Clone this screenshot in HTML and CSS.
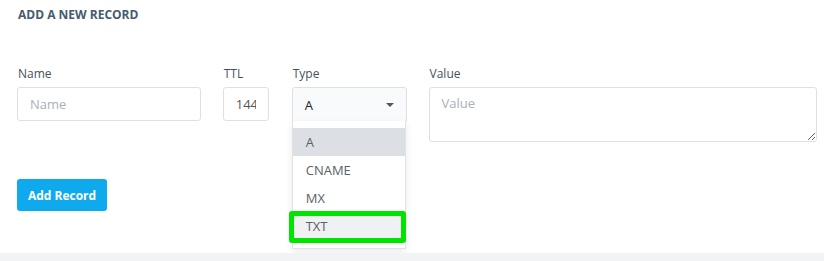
FILE: index.html
```html
<!DOCTYPE html>
<html lang="en">
<head>
    <meta charset="UTF-8" />
    <title>Add a new record</title>
    <link rel="stylesheet" href="styles.css">
</head>
<body>
    <div class="card">
        <h2 class="card-title">ADD A NEW RECORD</h2>

        <div class="fields">
            <div class="field field-name">
                <label>Name</label>
                <input type="text" class="input" placeholder="Name" />
            </div>
            <div class="field field-ttl">
                <label>TTL</label>
                <input type="text" class="input" value="14400" />
            </div>
            <div class="field field-type">
                <label>Type</label>
                <div class="select">
                    <span>A</span>
                    <span class="caret"></span>
                </div>
                <ul class="options">
                    <li class="active">A</li>
                    <li>CNAME</li>
                    <li>MX</li>
                    <li class="hover">TXT</li>
                </ul>
                <div class="mark"></div>
            </div>
            <div class="field field-value">
                <label>Value</label>
                <textarea class="input" placeholder="Value"></textarea>
            </div>
        </div>

        <button class="btn">Add Record</button>
    </div>
</body>
</html>
```

FILE: styles.css
```css
body {
    margin: 0;
    background: #f2f3f5;
    font-family: "Open Sans", "Noto Sans", sans-serif;
    color: #4b5663;
}

.card {
    background: #fff;
    height: 253px;
    padding: 7px 7px 0 17px;
    box-sizing: border-box;
    box-shadow: 0 1px 3px rgba(0, 0, 0, 0.06);
}

.card-title {
    margin: 0 0 0 1px;
    font-size: 12px;
    font-weight: 700;
    line-height: 16px;
    color: #475a6e;
}

.fields {
    display: flex;
    gap: 22px;
    margin-top: 43px;
}

.field {
    display: flex;
    flex-direction: column;
    position: relative;
}

.field label {
    font-size: 12px;
    line-height: 16px;
    margin: 0 0 5px 1px;
    color: #44525f;
}

.field-name { width: 184px; }
.field-ttl { width: 46px; }
.field-type { width: 115px; margin-left: 1px; }
.field-value { width: 389px; }

.input {
    box-sizing: border-box;
    height: 34px;
    border: 1px solid #dde1e5;
    border-radius: 3px;
    padding: 0 12px;
    font-family: inherit;
    font-size: 13px;
    color: #555;
    outline: none;
    width: 100%;
}

.input::placeholder {
    color: #a9b0b8;
}

textarea.input {
    height: 55px;
    padding: 6px 12px;
    resize: vertical;
}

.select {
    box-sizing: border-box;
    height: 35px;
    border: 1px solid #dde1e5;
    border-radius: 3px 3px 0 0;
    background: #f9fafb;
    display: flex;
    align-items: center;
    justify-content: space-between;
    padding: 0 12px 0 12px;
    font-size: 13px;
    color: #222;
}

.caret {
    width: 0;
    height: 0;
    border-left: 4px solid transparent;
    border-right: 4px solid transparent;
    border-top: 4px solid #555;
}

.options {
    position: absolute;
    top: 55px;
    left: 0;
    width: 114px;
    box-sizing: border-box;
    margin: 0;
    padding: 7px 0 8px;
    list-style: none;
    background: #fff;
    border: 1px solid #dfe2e6;
    border-top: none;
    box-shadow: 0 3px 8px rgba(0, 0, 0, 0.08);
    font-size: 13px;
}

.options li {
    height: 28px;
    line-height: 28px;
    padding: 0 13px;
    color: #5a5f66;
}

.options li.active {
    background: #dcdfe4;
}

.options li.hover {
    background: #f0f1f3;
}

.mark {
    position: absolute;
    top: 145px;
    left: -3px;
    width: 117px;
    height: 32px;
    box-sizing: border-box;
    border: 5px solid #00e400;
    border-radius: 3px;
}

.btn {
    margin-top: 37px;
    width: 90px;
    height: 32px;
    border: none;
    border-radius: 3px;
    background: #0faaee;
    color: #fff;
    font-family: inherit;
    font-size: 12px;
    font-weight: 700;
    cursor: pointer;
}
```
